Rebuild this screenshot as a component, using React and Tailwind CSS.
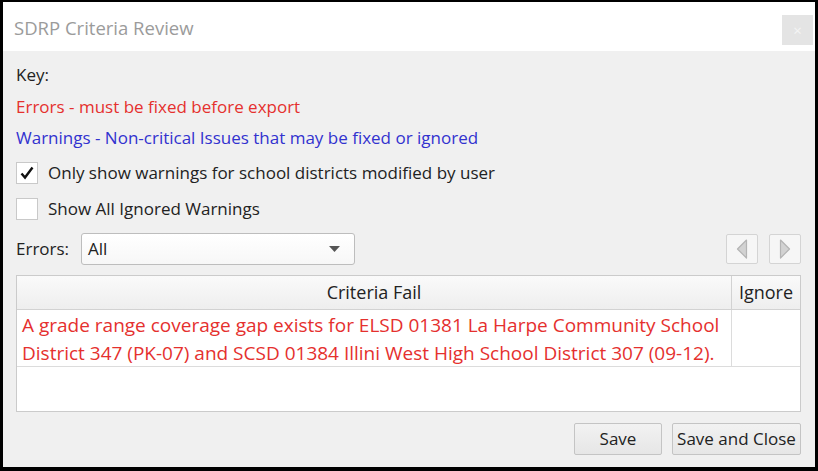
import React from 'react';

const font = { fontFamily: '"Open Sans", "Noto Sans", sans-serif' };

const Check = ({ checked, label }) => (
  <div className="flex items-center h-[22px]">
    <div className="w-[22px] h-[22px] bg-white border border-[#c9c9c9] flex items-center justify-center">
      {checked && (
        <svg width="16" height="16" viewBox="0 0 16 16">
          <path d="M2.5 8.5 L6 12.5 L13.5 2.5" fill="none" stroke="#111" strokeWidth="2.4" strokeLinejoin="miter" />
        </svg>
      )}
    </div>
    <span className="ml-[10px] text-[17px] text-[#222]">{label}</span>
  </div>
);

const NavButton = ({ dir }) => (
  <div className="w-[32px] h-[30px] bg-[#f6f6f6] border border-[#d4d4d4] rounded-[2px] flex items-center justify-center">
    <svg width="14" height="22" viewBox="0 0 14 22">
      {dir === 'left' ? (
        <path d="M11.5 2 L2.5 11 L11.5 20 Z" fill="#d2d2d2" stroke="#b4b4b4" strokeWidth="1.2" strokeLinejoin="round" />
      ) : (
        <path d="M2.5 2 L11.5 11 L2.5 20 Z" fill="#d2d2d2" stroke="#b4b4b4" strokeWidth="1.2" strokeLinejoin="round" />
      )}
    </svg>
  </div>
);

export default function App() {
  return (
    <div className="w-[818px] h-[471px] bg-black pt-[2px] pl-[3px] pr-[3px] pb-[4px] flex flex-col" style={font}>
      {/* title bar */}
      <div className="h-[49px] bg-white flex items-start shrink-0">
        <div className="pl-[11px] pt-[15px] text-[18.5px] text-[#9b9b9b] leading-[22px] flex-1">SDRP Criteria Review</div>
        <div className="mt-[13px] mr-[2px] w-[31px] h-[30px] bg-[#e4e4e4] flex items-center justify-center text-[#f4f4f4] text-[15px]">
          ×
        </div>
      </div>

      {/* body */}
      <div className="flex-1 bg-[#f0f0f0] pl-[13px] pr-[14px] pt-[12px] flex flex-col">
        <div className="h-[24px] leading-[24px] text-[17px] text-[#222]">Key:</div>
        <div className="h-[24px] leading-[24px] text-[17px] text-[#e5302e] mt-[8px]">Errors - must be fixed before export</div>
        <div className="h-[24px] leading-[24px] text-[17px] text-[#3232cf] mt-[7px]">Warnings - Non-critical Issues that may be fixed or ignored</div>

        <div className="mt-[12px]">
          <Check checked label="Only show warnings for school districts modified by user" />
        </div>
        <div className="mt-[14px]">
          <Check label="Show All Ignored Warnings" />
        </div>

        <div className="mt-[13px] h-[32px] flex items-center">
          <span className="text-[17px] text-[#222] w-[65px]">Errors:</span>
          <div className="w-[274px] h-[32px] bg-gradient-to-b from-white to-[#f7f7f7] border border-[#bdbdbd] rounded-[3px] flex items-center pl-[6px] pr-[14px]">
            <span className="text-[17px] text-[#222] flex-1">All</span>
            <svg width="11" height="6" viewBox="0 0 11 6">
              <path d="M0 0 L11 0 L5.5 6 Z" fill="#555" />
            </svg>
          </div>
          <div className="flex-1" />
          <NavButton dir="left" />
          <div className="w-[11px]" />
          <NavButton dir="right" />
        </div>

        {/* table */}
        <div className="mt-[10px] h-[137px] bg-white border border-[#cbcbcb] flex flex-col">
          <div className="h-[34px] flex bg-gradient-to-b from-[#fafafa] to-[#eeeeee] border-b border-[#d2d2d2]">
            <div className="flex-1 flex items-center justify-center text-[18px] text-[#222] border-r border-[#d2d2d2]">Criteria Fail</div>
            <div className="w-[68px] flex items-center justify-center text-[18px] text-[#222]">Ignore</div>
          </div>
          <div className="h-[57px] flex border-b border-[#dcdcdc]">
            <div className="flex-1 pl-[5px] pt-[1px] text-[19px] leading-[28px] text-[#e5302e] border-r border-[#dcdcdc] whitespace-nowrap">
              A grade range coverage gap exists for ELSD 01381 La Harpe Community School
              <br />
              District 347 (PK-07) and SCSD 01384 Illini West High School District 307 (09-12).
            </div>
            <div className="w-[68px]" />
          </div>
        </div>

        {/* buttons */}
        <div className="mt-[11px] flex justify-end gap-[10px]">
          <div className="w-[88px] h-[32px] bg-gradient-to-b from-[#f2f2f2] to-[#e6e6e6] border border-[#c4c4c4] rounded-[2px] flex items-center justify-center text-[17px] text-[#222]">
            Save
          </div>
          <div className="w-[129px] h-[32px] bg-gradient-to-b from-[#f2f2f2] to-[#e6e6e6] border border-[#c4c4c4] rounded-[2px] flex items-center justify-center text-[17px] text-[#222]">
            Save and Close
          </div>
        </div>
      </div>
    </div>
  );
}
